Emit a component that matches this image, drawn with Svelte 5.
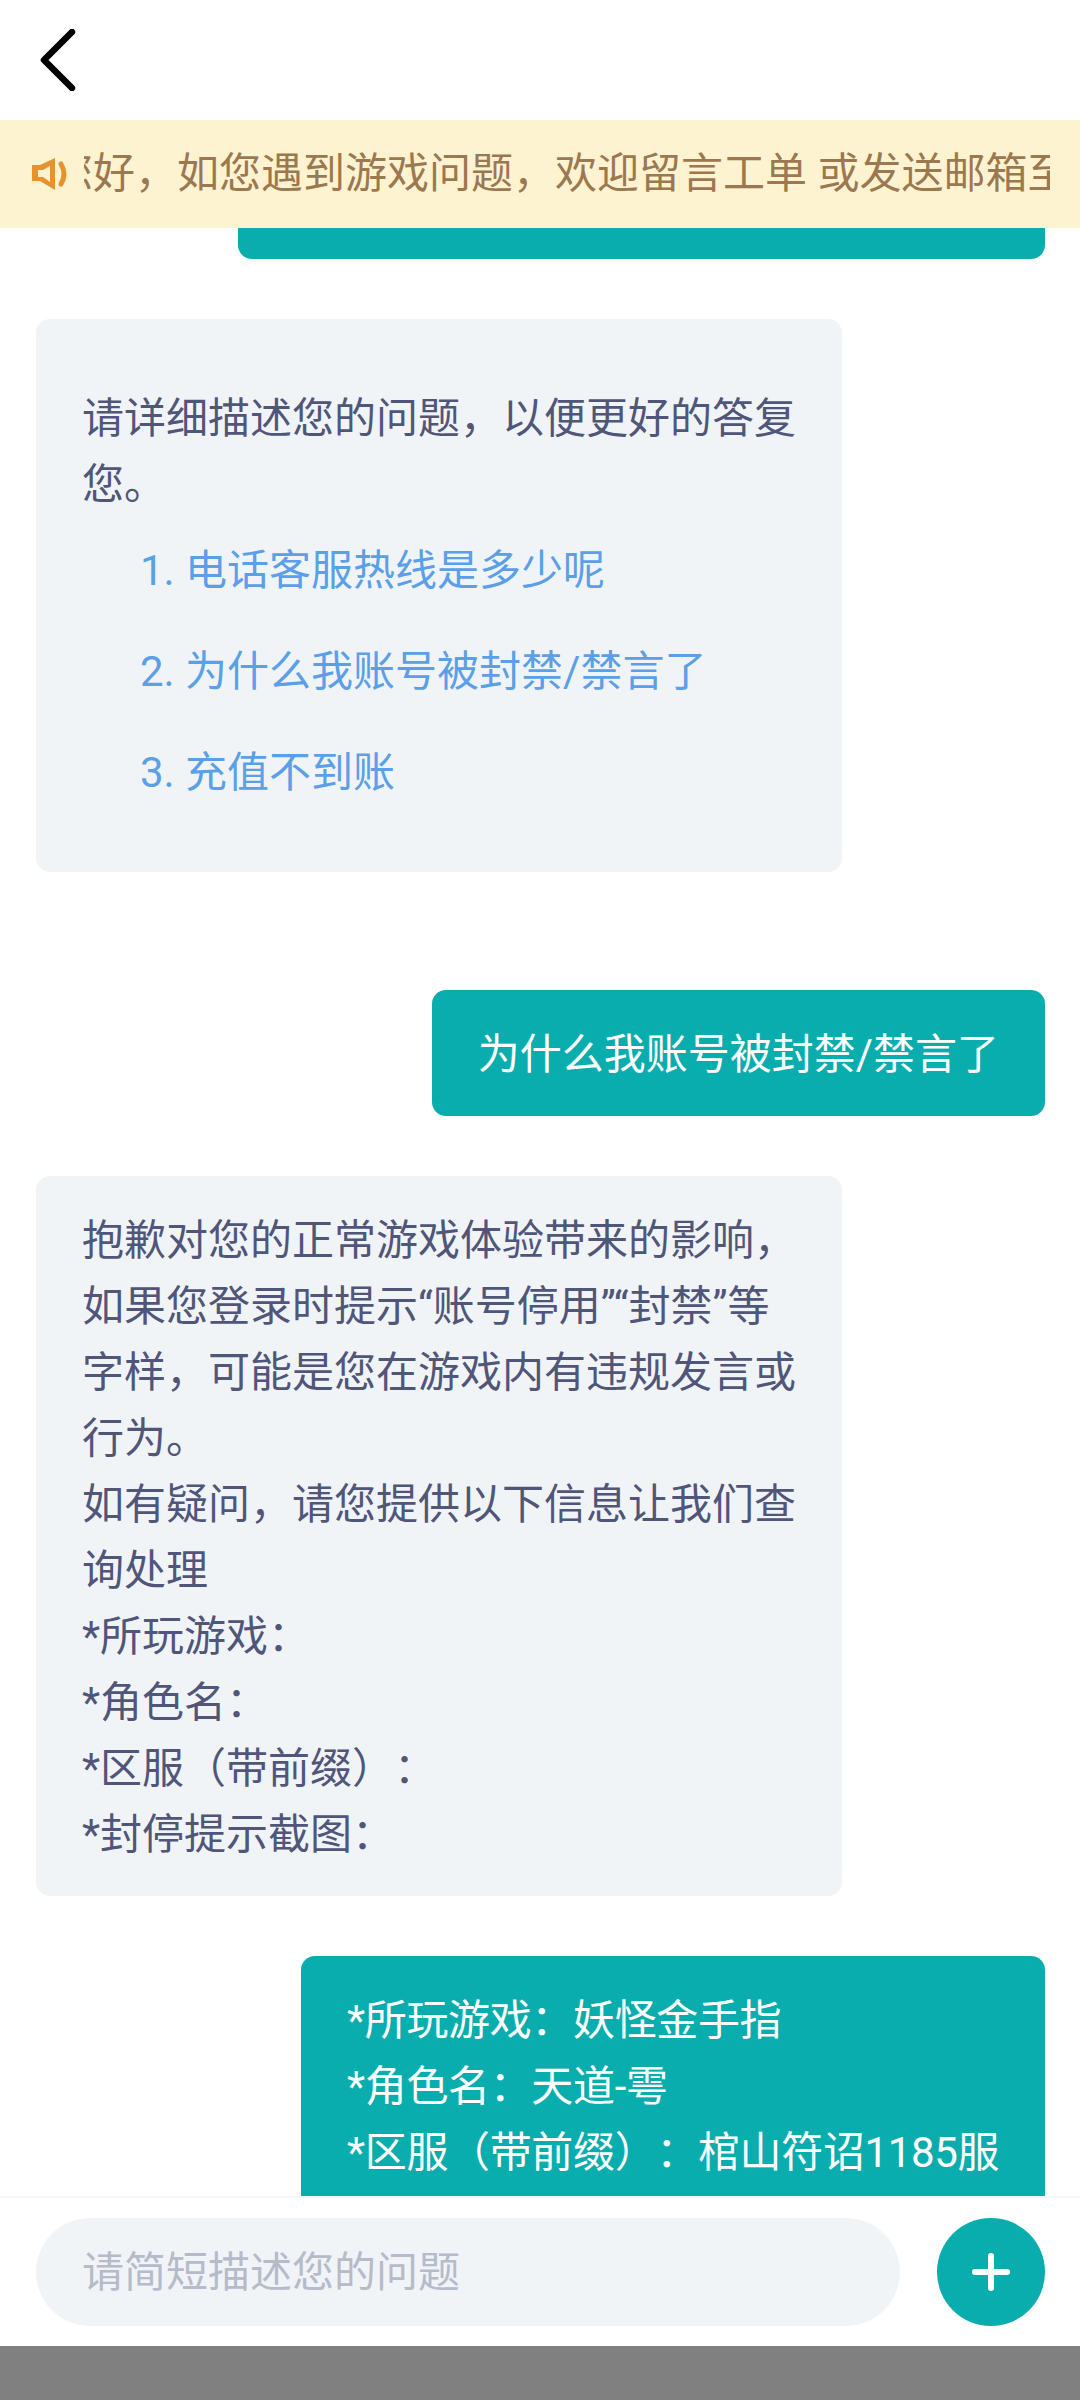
<script>
	const options = ['1. 电话客服热线是多少呢', '2. 为什么我账号被封禁/禁言了', '3. 充值不到账'];

	const answer = [
		'抱歉对您的正常游戏体验带来的影响，',
		'如果您登录时提示“账号停用”“封禁”等',
		'字样，可能是您在游戏内有违规发言或',
		'行为。',
		'如有疑问，请您提供以下信息让我们查',
		'询处理',
		'*所玩游戏：',
		'*角色名：',
		'*区服（带前缀）：',
		'*封停提示截图：'
	];

	const reply = ['*所玩游戏：妖怪金手指', '*角色名：天道-雩', '*区服（带前缀）：棺山符诏1185服'];
</script>

<div class="page" lang="zh-CN">
	<header class="header">
		<svg class="back" viewBox="0 0 36 62" width="36" height="62" aria-label="返回">
			<path d="M32 3 L4 31 L32 59" fill="none" stroke="#000" stroke-width="6.5" stroke-linecap="round" stroke-linejoin="round" />
		</svg>
	</header>

	<div class="notice">
		<svg class="speaker" viewBox="0 0 36 32" width="36" height="32">
			<path d="M0 7 H8 L23 0 V32 L8 23 H0 Z M6 12 V19 H11 L18 24 V8 L11 12 Z" fill="#e6932f" fill-rule="evenodd" />
			<path d="M29 6 Q35 16 29 26" fill="none" stroke="#e6932f" stroke-width="5" stroke-linecap="round" />
		</svg>
		<div class="notice-track">
			<span class="notice-text">您好，如您遇到游戏问题，欢迎留言工单 或发送邮箱至</span>
		</div>
	</div>

	<main class="chat">
		<div class="bubble mine clipped"></div>

		<div class="bubble theirs intro">
			<p>请详细描述您的问题，以便更好的答复您。</p>
			<ul class="options">
				{#each options as option}
					<li>{option}</li>
				{/each}
			</ul>
		</div>

		<div class="bubble mine">为什么我账号被封禁/禁言了</div>

		<div class="bubble theirs">
			{#each answer as line}
				<div>{line}</div>
			{/each}
		</div>

		<div class="bubble mine open">
			{#each reply as line}
				<div>{line}</div>
			{/each}
		</div>
	</main>

	<footer class="footer">
		<input class="field" type="text" placeholder="请简短描述您的问题" />
		<button class="send" aria-label="发送">
			<svg viewBox="0 0 38 38" width="38" height="38">
				<path d="M19 3 V35 M3 19 H35" fill="none" stroke="#fff" stroke-width="6" stroke-linecap="round" />
			</svg>
		</button>
	</footer>

	<div class="nav-bar"></div>
</div>

<style>
	:global(body) {
		margin: 0;
		background: #fff;
	}

	.page {
		display: flex;
		flex-direction: column;
		height: 2400px;
		overflow: hidden;
		font-family: Roboto, 'Noto Sans CJK SC', sans-serif;
		font-size: 42px;
		line-height: 66px;
		text-spacing-trim: space-all;
	}

	.header {
		flex: none;
		display: flex;
		align-items: center;
		height: 120px;
		padding-left: 40px;
	}

	.back {
		display: block;
	}

	.notice {
		flex: none;
		display: flex;
		align-items: center;
		gap: 16px;
		height: 108px;
		padding: 0 30px 0 32px;
		background: #fdf3d1;
		color: #9c7850;
	}

	.notice-track {
		flex: 1;
		overflow: hidden;
		white-space: nowrap;
	}

	.notice-text {
		display: inline-block;
		margin-left: -33px;
	}

	.chat {
		flex: 1;
		min-height: 0;
		overflow: hidden;
		display: flex;
		flex-direction: column;
		gap: 60px;
		padding: 0 35px 0 36px;
	}

	.bubble {
		flex: none;
		box-sizing: border-box;
		padding: 32px 46px 28px;
		border-radius: 14px;
	}

	.mine {
		align-self: flex-end;
		background: #0aadad;
		color: #fff;
	}

	.clipped {
		width: 807px;
		height: 31px;
		padding: 0;
		border-radius: 0 0 14px 14px;
	}

	/* runs on under the input bar */
	.open {
		flex: 1;
		width: 744px;
		padding-right: 30px;
		white-space: nowrap;
		letter-spacing: -0.35px;
		border-radius: 14px 14px 0 0;
	}

	.theirs {
		align-self: flex-start;
		width: 806px;
		background: #f1f4f7;
		color: #50567a;
	}

	.intro {
		padding-top: 67px;
		padding-bottom: 31px;
		margin-bottom: 58px;
	}

	.intro p {
		margin: 0 0 20px;
	}

	.options {
		list-style: none;
		margin: 0;
		padding: 0 0 0 58px;
		color: #5a9fe8;
	}

	.options li {
		margin-bottom: 35px;
	}

	.footer {
		flex: none;
		display: flex;
		align-items: center;
		justify-content: space-between;
		box-sizing: border-box;
		height: 150px;
		padding: 0 35px 0 36px;
		background: #fff;
		border-top: 2px solid #f5f6f7;
	}

	.field {
		box-sizing: border-box;
		width: 864px;
		height: 108px;
		padding: 0 46px;
		border: none;
		border-radius: 54px;
		outline: none;
		background: #f1f4f7;
		font: inherit;
		color: #50567a;
	}

	.field::placeholder {
		color: #b6bbca;
		opacity: 1;
	}

	.send {
		display: flex;
		align-items: center;
		justify-content: center;
		width: 108px;
		height: 108px;
		padding: 0;
		border: none;
		border-radius: 50%;
		background: #0aadad;
	}

	.nav-bar {
		flex: none;
		height: 54px;
		background: #808080;
	}
</style>
